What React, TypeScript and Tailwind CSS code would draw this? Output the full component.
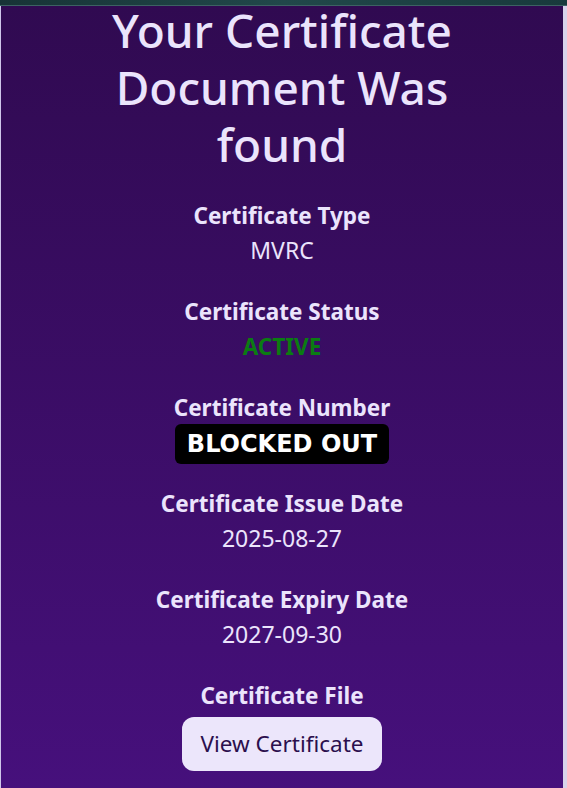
const rows = [
  { label: "Certificate Type", value: "MVRC" },
  { label: "Certificate Status", value: "ACTIVE", kind: "status" },
  { label: "Certificate Number", value: "BLOCKED OUT", kind: "blocked" },
  { label: "Certificate Issue Date", value: "2025-08-27" },
  { label: "Certificate Expiry Date", value: "2027-09-30" },
];

export default function App() {
  return (
    <div
      className="w-[567px] h-[788px] overflow-hidden flex flex-col bg-[#1b3b3c]"
      style={{ fontFamily: "'Noto Sans', 'Open Sans', sans-serif" }}
    >
      {/* top strip from page behind */}
      <div className="h-[6px] shrink-0 bg-gradient-to-r from-[#173436] via-[#21484a] to-[#183a3c] border-b border-[#3d6263]" />

      <div className="flex flex-1 min-h-0">
        <main className="flex-1 flex flex-col items-center border-l border-[#cfc6ea] bg-gradient-to-b from-[#300a51] to-[#46107c] text-[#ebe4fc] text-center">
          <h1 className="-mt-1 w-[400px] text-[46px] leading-[57px] font-medium">
            Your Certificate Document Was found
          </h1>

          <div className="mt-[25px] flex flex-col gap-[26px]">
            {rows.map((row) => (
              <div key={row.label} className="flex flex-col items-center">
                <p className="text-[22.5px] leading-[35px] font-bold">{row.label}</p>
                {row.kind === "status" ? (
                  <p className="text-[22.5px] leading-[35px] font-bold text-[#0b7c12]">{row.value}</p>
                ) : row.kind === "blocked" ? (
                  <p className="h-[35px] pt-[4px] leading-[35px]">
                    <span
                      className="inline bg-black text-white rounded-[6px] px-3 py-[6px] text-[24px] leading-none font-bold"
                      style={{ fontFamily: "'DejaVu Sans', sans-serif" }}
                    >
                      {row.value}
                    </span>
                  </p>
                ) : (
                  <p className="text-[23px] leading-[35px]">{row.value}</p>
                )}
              </div>
            ))}

            <div className="flex flex-col items-center">
              <p className="text-[22.5px] leading-[35px] font-bold">Certificate File</p>
              <button
                type="button"
                className="mt-[4px] w-[200px] h-[54px] rounded-[12px] bg-[#ece6fb] text-[#2b0f4d] text-[22.5px]"
              >
                View Certificate
              </button>
            </div>
          </div>
        </main>

        <div className="w-[4px] shrink-0 bg-[#d8d3ea]" />
      </div>
    </div>
  );
}
